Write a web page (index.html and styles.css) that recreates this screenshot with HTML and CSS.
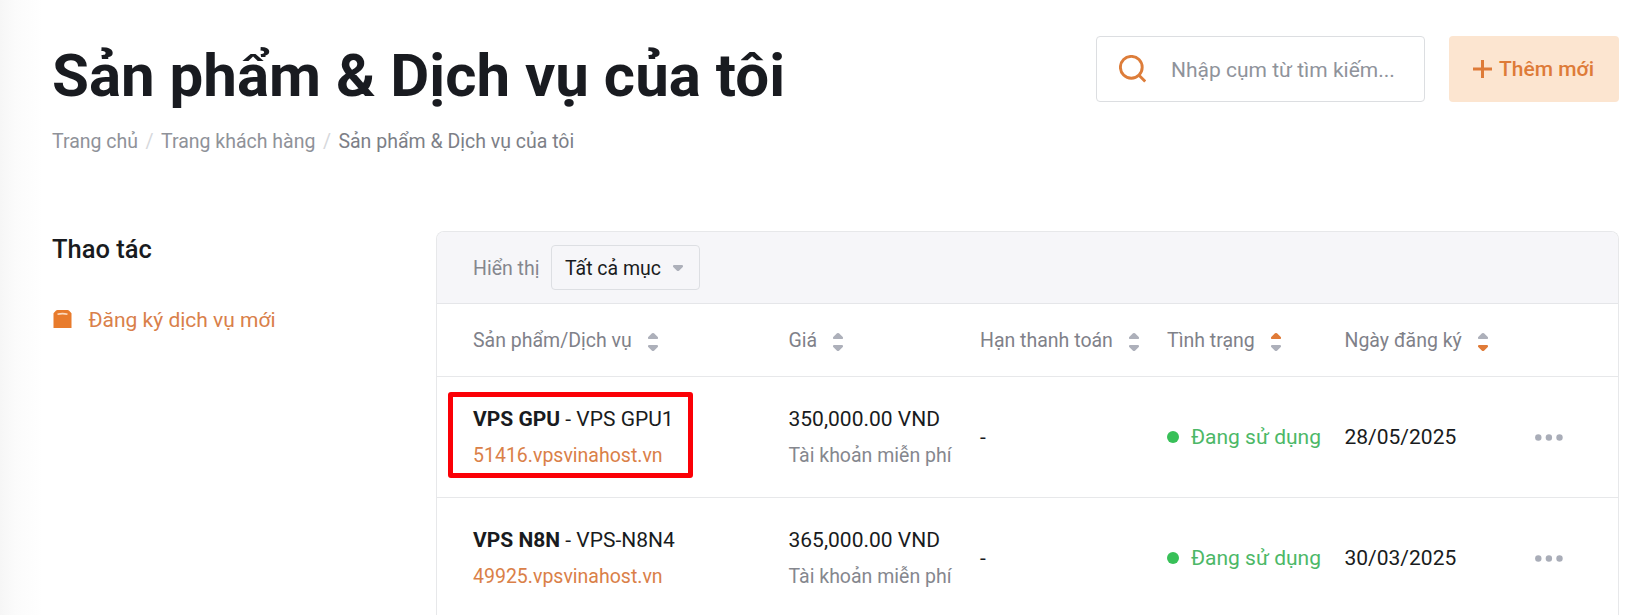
FILE: index.html
```html
<!DOCTYPE html>
<html lang="vi">
<head>
<meta charset="utf-8">
<title>Sản phẩm &amp; Dịch vụ của tôi</title>
<link rel="stylesheet" href="styles.css">
</head>
<body>
<svg class="defs" width="0" height="0">
  <symbol id="up" viewBox="0 0 10 6"><path d="M4 .3Q5-.3 6 .3L9.800 4Q10.200 4.800 9.900 5.500Q9.700 6 9 6H1Q.3 6 .1 5.500Q-.2 4.800 .2 4Z"/></symbol>
  <symbol id="dots" viewBox="0 0 28 7"><circle cx="3.300" cy="3.500" r="3.200"/><circle cx="13.900" cy="3.500" r="3.200"/><circle cx="24.500" cy="3.500" r="3.200"/></symbol>
</svg>
<div class="page">
  <header class="top">
    <div class="heading">
      <h1 class="title">Sản phẩm &amp; Dịch vụ của tôi</h1>
      <nav class="crumbs"><a>Trang chủ</a><i>/</i><a>Trang khách hàng</a><i>/</i><span>Sản phẩm &amp; Dịch vụ của tôi</span></nav>
    </div>
    <div class="actions">
      <div class="search">
        <svg class="search-icon" width="27" height="28" viewBox="0 0 27 28"><circle cx="12.300" cy="12.300" r="10.900"/><path d="M19.500 19.800L26.200 26.600"/></svg>
        <span class="placeholder">Nhập cụm từ tìm kiếm...</span>
      </div>
      <button class="add"><svg width="19" height="18" viewBox="0 0 19 18"><path d="M9.500 0V18M0 9H19"/></svg><span>Thêm mới</span></button>
    </div>
  </header>
  <div class="content">
    <aside class="side">
      <h2 class="side-title">Thao tác</h2>
      <a class="side-link"><svg class="bag" width="19" height="18" viewBox="0 0 19 18"><path class="box" d="M4.500 0H14.500Q15.500 0 16.200.8L18.500 3.300V18H.5V3.300L2.800.8Q3.500 0 4.500 0Z"/><path class="slot" d="M4.500 4.300Q9.500 3 14.500 4.300"/></svg><span>Đăng ký dịch vụ mới</span></a>
    </aside>
    <main class="card">
      <div class="toolbar"><span class="label">Hiển thị</span><div class="select"><span>Tất cả mục</span><svg class="arrow" width="10" height="6"><use href="#up"/></svg></div></div>
      <div class="row head">
        <div class="th"><span>Sản phẩm/Dịch vụ</span><div class="sort"><svg><use href="#up"/></svg><svg class="down"><use href="#up"/></svg></div></div>
        <div class="th"><span>Giá</span><div class="sort"><svg><use href="#up"/></svg><svg class="down"><use href="#up"/></svg></div></div>
        <div class="th"><span>Hạn thanh toán</span><div class="sort"><svg><use href="#up"/></svg><svg class="down"><use href="#up"/></svg></div></div>
        <div class="th"><span>Tình trạng</span><div class="sort"><svg class="on"><use href="#up"/></svg><svg class="down"><use href="#up"/></svg></div></div>
        <div class="th"><span>Ngày đăng ký</span><div class="sort"><svg><use href="#up"/></svg><svg class="down on"><use href="#up"/></svg></div></div>
      </div>
      <div class="row item">
        <div class="highlight"></div>
        <div><div class="name"><b>VPS GPU</b> - VPS GPU1</div><a class="domain">51416.vpsvinahost.vn</a></div>
        <div><div class="price">350,000.00 VND</div><div class="muted">Tài khoản miễn phí</div></div>
        <div class="due">-</div>
        <div class="status"><i class="dot"></i><span>Đang sử dụng</span></div>
        <div class="date">28/05/2025</div>
        <svg class="more" width="28" height="7"><use href="#dots"/></svg>
      </div>
      <div class="row item">
        <div><div class="name"><b>VPS N8N</b> - VPS-N8N4</div><a class="domain">49925.vpsvinahost.vn</a></div>
        <div><div class="price">365,000.00 VND</div><div class="muted">Tài khoản miễn phí</div></div>
        <div class="due">-</div>
        <div class="status"><i class="dot"></i><span>Đang sử dụng</span></div>
        <div class="date">30/03/2025</div>
        <svg class="more" width="28" height="7"><use href="#dots"/></svg>
      </div>
    </main>
  </div>
</div>
</body>
</html>
```
FILE: styles.css
```css
* { box-sizing: border-box; }
body {
  margin: 0;
  background: linear-gradient(to right, #f6f6f6 0, #fbfbfb 15px, #fefefe 38px, #fff 42px);
  font: 21px/36px Roboto, sans-serif;
  color: #191b20;
}
.defs { display: block; height: 0; }
.page { height: 615px; overflow: hidden; padding: 36px 33px 0 52px; }
.top { display: flex; justify-content: space-between; height: 195px; }
.title { margin: 0; padding-top: 1px; font-size: 60px; line-height: 78px; font-weight: 700; white-space: nowrap; }
.crumbs { display: flex; margin-top: 9px; font-size: 19.5px; color: #8f9299; white-space: nowrap; }
.crumbs i { width: 23px; text-align: center; font-style: normal; color: #d6d8dc; }
.crumbs span { color: #7d7f87; }
.actions { display: flex; gap: 24px; height: 66px; }
.search { display: flex; align-items: center; width: 329px; padding-left: 22px; border: 1px solid #dcdee1; border-radius: 4px; background: #fff; }
.search-icon { fill: none; stroke: #dd7d3a; stroke-width: 2.9; }
.placeholder { margin-left: 25px; padding-top: 2px; color: #8f939b; white-space: nowrap; }
.add { display: flex; align-items: center; justify-content: flex-start; gap: 7px; width: 170px; padding: 0 0 0 24px; border: 0; border-radius: 4px; background: #fce5d0; color: #de7b38; font: 500 21px/36px Roboto, sans-serif; white-space: nowrap; }
.add svg { fill: none; stroke: #de7b38; stroke-width: 3; }
.content { display: flex; }
.side { width: 384px; }
.side-title { margin: 0; font-size: 25.5px; line-height: 36px; font-weight: 500; }
.side-link { display: flex; align-items: center; gap: 17px; margin-top: 35px; color: #d9804a; }
.bag { margin: 0 0 2px .5px; }
.box { fill: #e87b2c; }
.slot { fill: none; stroke: #fbd9bd; stroke-width: 1.6; }
.card { flex: 1; height: 384px; overflow: hidden; border: 1px solid #e7e8ea; border-bottom: 0; border-radius: 8px 8px 0 0; }
.toolbar { display: flex; align-items: center; height: 72px; padding-left: 36px; border-bottom: 1px solid #e5e6e9; background: #f6f6f9; }
.label { padding-top: 2px; color: #85878e; font-size: 19.5px; }
.select { display: flex; align-items: center; gap: 12px; width: 149px; height: 45px; margin-left: 12px; padding-left: 12.5px; border: 1px solid #dddfe3; border-radius: 4px; font-size: 19.5px; white-space: nowrap; }
.select span { padding-top: 2px; }
.arrow { fill: #adb0ba; transform: rotate(180deg); }
.row { position: relative; display: grid; grid-template-columns: 315.500px 191.500px 187px 177.500px 190.500px 1fr; align-items: center; padding-left: 36px; border-bottom: 1px solid #e7e8ea; white-space: nowrap; }
.head { height: 73px; font-size: 19.5px; color: #7f8189; }
.th { display: flex; align-items: center; gap: 16px; }
.th span { padding-top: 2px; }
.sort { display: flex; flex-direction: column; gap: 6px; margin-top: 4px; }
.sort svg { display: block; width: 10px; height: 6px; fill: #adb0ba; }
.sort .down { transform: rotate(180deg); }
.sort .on { fill: #e07b38; }
.item { height: 121px; }
.domain { display: block; height: 36px; padding-top: 1px; color: #da8048; font-size: 19.5px; }
.muted { height: 36px; padding-top: 1px; color: #85878e; font-size: 19.5px; }
.due { padding-bottom: 1px; }
.status { display: flex; align-items: center; gap: 12px; color: #4cb867; }
.dot { width: 12px; height: 12px; border-radius: 50%; background: #38c058; }
.more { fill: #a9adb8; }
.highlight { position: absolute; left: 11px; top: 15px; width: 245px; height: 86px; border: 5px solid #fb0006; border-radius: 3px; }
```
